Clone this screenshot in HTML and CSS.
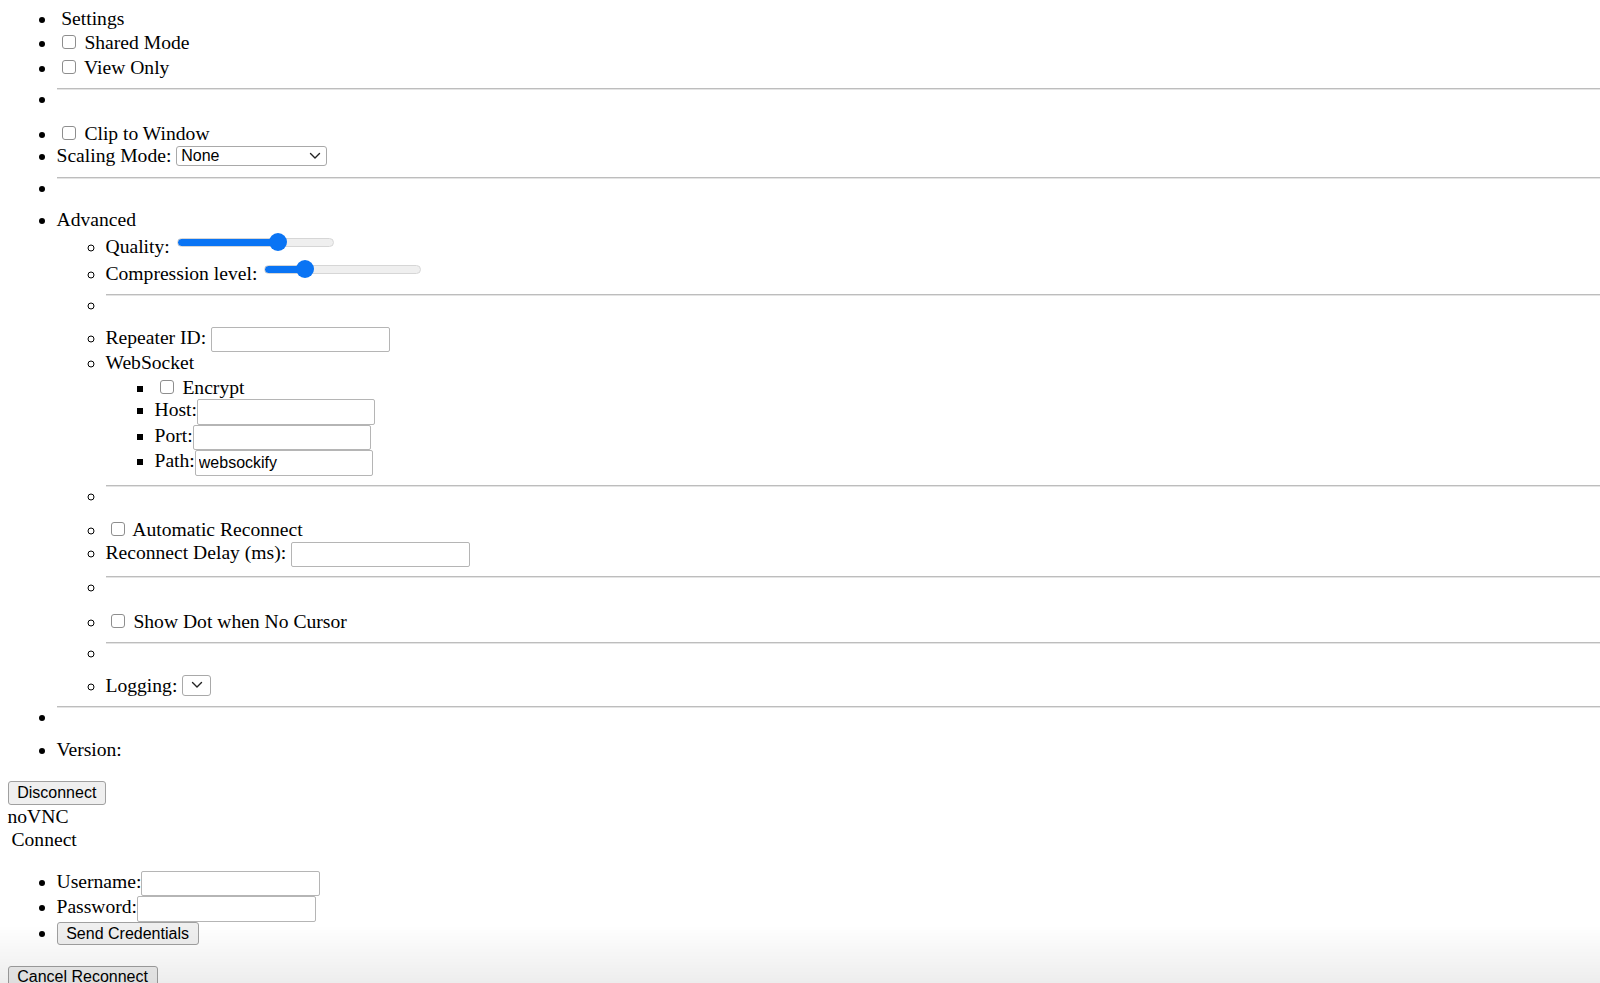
FILE: index.html
```html
<!DOCTYPE html>
<html lang="en">
<head>
<meta charset="utf-8">
<title>noVNC</title>
<link rel="stylesheet" href="styles.css">
</head>
<body class="page">
<div class="wrap">
  <ul class="list settings">
    <li class="item heading">Settings</li>
    <li class="item"><label><input type="checkbox" class="cb"> Shared Mode</label></li>
    <li class="item"><label><input type="checkbox" class="cb"> View Only</label></li>
    <li class="item sep"><hr class="rule"></li>
    <li class="item"><label><input type="checkbox" class="cb"> Clip to Window</label></li>
    <li class="item"><label>Scaling Mode:</label> <select class="sel sel-scale"><option>None</option></select></li>
    <li class="item sep"><hr class="rule"></li>
    <li class="item">Advanced
      <ul class="list sub">
        <li class="item"><label>Quality:</label> <input type="range" class="rng" min="0" max="9" value="6" style="--p:66.7%"></li>
        <li class="item"><label>Compression level:</label> <input type="range" class="rng" min="0" max="9" value="2" style="--p:22.2%"></li>
        <li class="item sep"><hr class="rule"></li>
        <li class="item"><label>Repeater ID:</label> <input type="text" class="txt"></li>
        <li class="item">WebSocket
          <ul class="list subsub">
            <li class="item"><label><input type="checkbox" class="cb"> Encrypt</label></li>
            <li class="item"><label>Host:</label><input type="text" class="txt"></li>
            <li class="item"><label>Port:</label><input type="text" class="txt"></li>
            <li class="item"><label>Path:</label><input type="text" class="txt" value="websockify"></li>
          </ul>
        </li>
        <li class="item sep"><hr class="rule"></li>
        <li class="item"><label><input type="checkbox" class="cb"> Automatic Reconnect</label></li>
        <li class="item"><label>Reconnect Delay (ms):</label> <input type="text" class="txt"></li>
        <li class="item sep"><hr class="rule"></li>
        <li class="item"><label><input type="checkbox" class="cb"> Show Dot when No Cursor</label></li>
        <li class="item sep"><hr class="rule"></li>
        <li class="item"><label>Logging:</label> <select class="sel sel-log"></select></li>
      </ul>
    </li>
    <li class="item sep"><hr class="rule"></li>
    <li class="item">Version: </li>
  </ul>

  <div class="btn-line"><button class="btn btn-block">Disconnect</button></div>
  <div class="brand">noVNC</div>
  <div class="connect">Connect</div>

  <ul class="list creds">
    <li class="item"><label>Username:</label><input type="text" class="txt"></li>
    <li class="item"><label>Password:</label><input type="password" class="txt"></li>
    <li class="item"><button class="btn">Send Credentials</button></li>
  </ul>

  <div class="btn-line"><button class="btn btn-block">Cancel Reconnect</button></div>
</div>
<div class="shade"></div>
</body>
</html>
```

FILE: styles.css
```css
html, body {
  background: #ffffff;
}

.page {
  margin: 0;
  font-family: "Liberation Serif", "Times New Roman", serif;
  font-size: 19.6px;
  line-height: 22.6px;
  color: #000;
}

.wrap {
  padding: 7.6px 0 0 7.5px;
}

.list {
  margin: 0;
  padding: 0 0 0 49px;
  list-style: disc;
}

.settings {
  margin-bottom: 19.6px;
}

.sub {
  list-style: circle;
}

.subsub {
  list-style: square;
}

.creds {
  margin: 19px 0 19.6px;
}

.heading {
  padding-left: 4.7px;
}

.rule {
  margin: 9px 0 9.8px;
  height: 0;
  border: 0;
  border-top: 1px solid #bdbdbd;
  border-bottom: 1px solid #e4e4e4;
}

.cb {
  -webkit-appearance: none;
  appearance: none;
  width: 14px;
  height: 14px;
  margin: 5px 4px 0 5px;
  border: 1px solid #8e8e8e;
  border-radius: 3px;
  background: #fff;
  vertical-align: baseline;
  box-sizing: border-box;
}

.rng {
  -webkit-appearance: none;
  appearance: none;
  width: 157px;
  height: 21px;
  margin: 0 2px;
  padding: 0;
  background: transparent;
  vertical-align: baseline;
}

.rng::-webkit-slider-runnable-track {
  height: 9px;
  border-radius: 5px;
  border: 1px solid #d6d6d6;
  box-sizing: border-box;
  background: linear-gradient(to right, #0a74f4 var(--p), #efefef var(--p));
}

.rng::-webkit-slider-thumb {
  -webkit-appearance: none;
  appearance: none;
  width: 18px;
  height: 18px;
  border-radius: 50%;
  background: #0a74f4;
  border: 0;
  margin-top: -5.5px;
}

.txt {
  box-sizing: border-box;
  width: 178.5px;
  height: 25.5px;
  margin: 0;
  padding: 1px 3px;
  border: 1px solid #b5b5b5;
  border-radius: 2px;
  font-family: "Liberation Sans", Arial, sans-serif;
  font-size: 16px;
  color: #000;
  background: #fff;
  vertical-align: middle;
}

.sel {
  -webkit-appearance: none;
  appearance: none;
  box-sizing: border-box;
  height: 20.3px;
  margin: 0;
  padding: 0 0 0 4px;
  border: 1px solid #a9a9a9;
  border-radius: 3px;
  font-family: "Liberation Sans", Arial, sans-serif;
  font-size: 16px;
  line-height: 18px;
  color: #000;
  background-color: #fff;
  background-image: url("data:image/svg+xml;utf8,<svg xmlns='http://www.w3.org/2000/svg' width='12' height='8' viewBox='0 0 12 8'><path d='M1.5 1.5 L6 6 L10.5 1.5' fill='none' stroke='%23222' stroke-width='1.4' stroke-linecap='round' stroke-linejoin='round'/></svg>");
  background-repeat: no-repeat;
  vertical-align: text-bottom;
}

.sel-scale {
  width: 151px;
  background-position: right 5px center;
}

.sel-log {
  width: 28.5px;
  background-position: center center;
}

.btn {
  box-sizing: border-box;
  height: 23.5px;
  margin: 0;
  padding: 0 8.7px;
  border: 1px solid #a0a0a0;
  border-radius: 3px;
  background: #efefef;
  font-family: "Liberation Sans", Arial, sans-serif;
  font-size: 16px;
  line-height: 20px;
  color: #000;
}

.btn-line {
  padding: 0.7px 0 1.5px;
}

.btn-block {
  display: block;
}

.connect {
  padding-left: 4px;
}

.shade {
  position: fixed;
  left: 0;
  right: 0;
  bottom: 0;
  height: 58px;
  pointer-events: none;
  background: linear-gradient(to bottom, rgba(0, 0, 0, 0), rgba(0, 0, 0, 0.07));
}
```
